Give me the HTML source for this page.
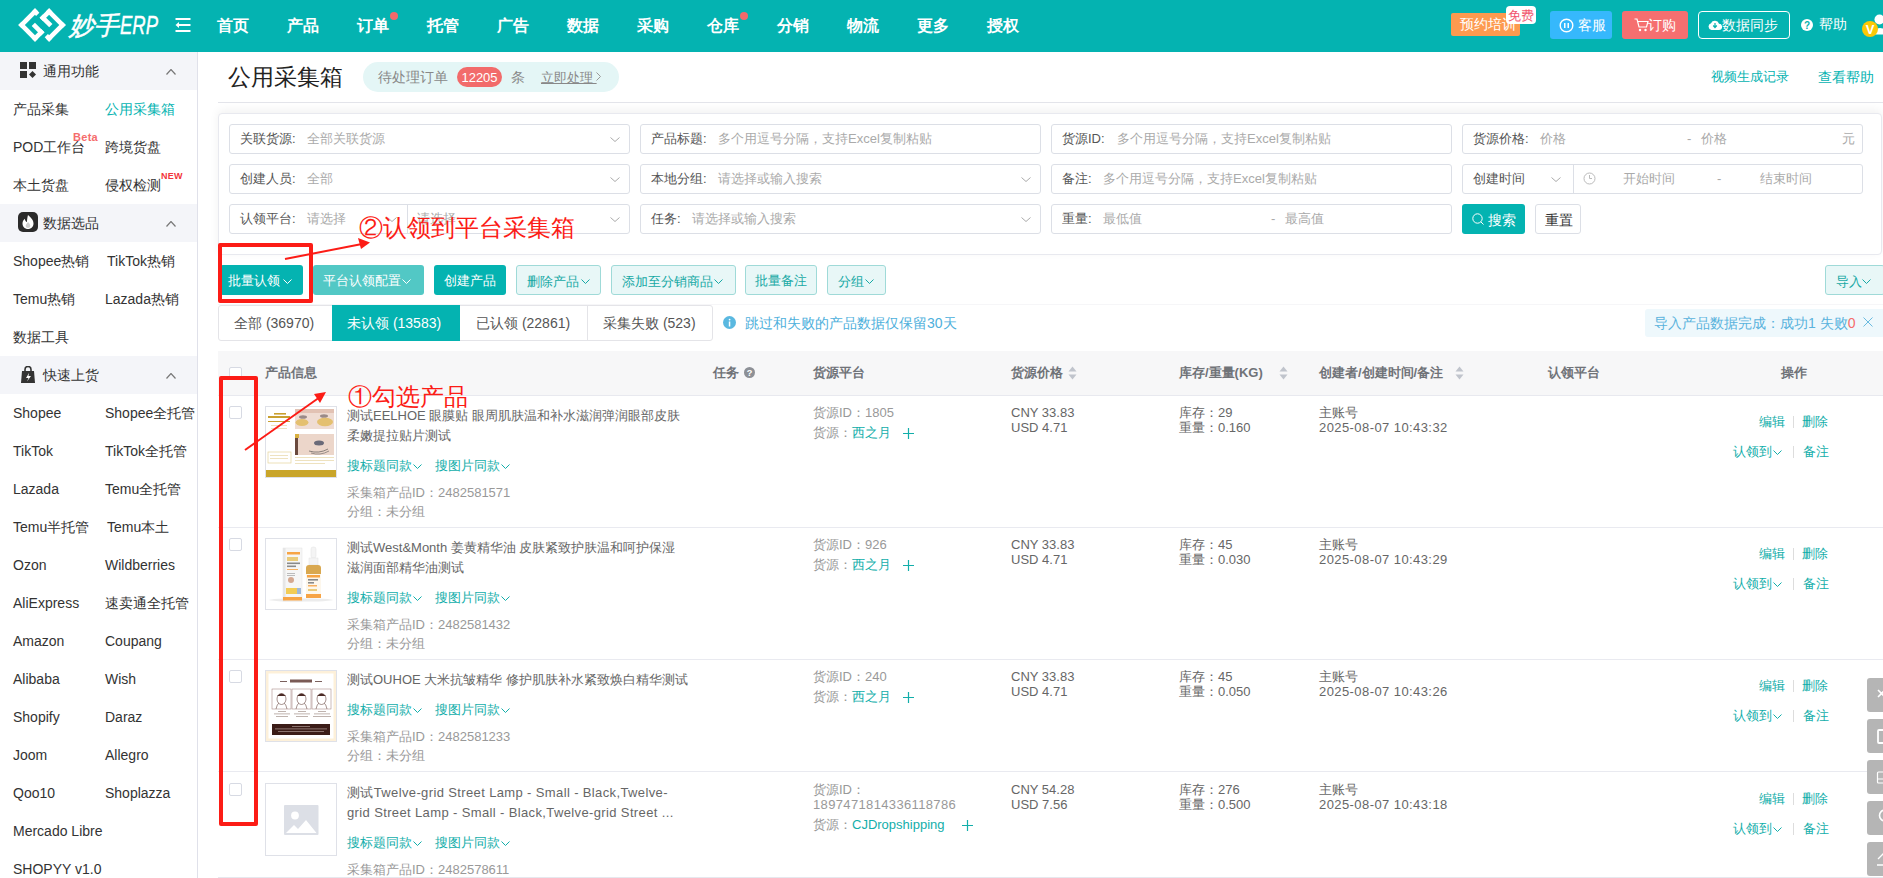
<!DOCTYPE html><html><head><meta charset="utf-8"><style>
*{box-sizing:border-box;margin:0;padding:0}
html,body{width:1883px;height:878px;overflow:hidden;background:#fff;font-family:"Liberation Sans",sans-serif;color:#333;font-size:14px;font-weight:350}
.a{position:absolute;white-space:nowrap}
.t{position:absolute;white-space:nowrap;line-height:20px}
.s13{font-size:13px}
.nav{font-size:16px;font-weight:bold;color:#fff;line-height:24px;top:14px}
.dot{position:absolute;width:8px;height:8px;border-radius:50%;background:#f46a6a}
.grp{position:absolute;left:0;width:197px;height:38px;background:#f4f5f9}
.inp{position:absolute;height:30px;border:1px solid #dcdfe6;border-radius:3px;background:#fff}
.lab{color:#555;font-size:13px}
.ph{color:#aaa;font-size:13px}
.btn{position:absolute;height:30px;border-radius:3px;font-size:13px;line-height:30px;text-align:left}
.cb{position:absolute;width:13px;height:13px;border:1px solid #d7dae3;border-radius:2px;background:#fff}
.link{color:#12aeaa}
.g9{color:#999}
.g5{color:#666}
.th{font-weight:bold;color:#707378;font-size:13px}
</style></head><body>
<div class="a" style="left:0;top:0;width:1883px;height:52px;background:#04b3b1"></div>
<svg class="a" style="left:0;top:0" width="200" height="52" viewBox="0 0 200 52">
<g fill="#fff" transform="translate(35 25) rotate(45)">
<rect x="-11.8" y="-11.8" width="4.6" height="23.6"/><rect x="-11.8" y="7.2" width="23.6" height="4.6"/>
<rect x="7.2" y="-1.6" width="4.6" height="13.4"/><rect x="-1.7" y="-1.6" width="13.5" height="4.6"/>
<rect x="-11.8" y="-11.8" width="6.2" height="4.6"/></g>
<g fill="#fff" transform="translate(49.1 25) rotate(45)">
<rect x="7.2" y="-11.8" width="4.6" height="23.6"/><rect x="-11.8" y="-11.8" width="23.6" height="4.6"/>
<rect x="-11.8" y="-11.8" width="4.6" height="13.4"/><rect x="-11.8" y="-3" width="13.5" height="4.6"/>
<rect x="5.6" y="7.2" width="6.2" height="4.6"/></g>
<text x="69" y="34" fill="#fff" stroke="#fff" stroke-width="0.5" font-size="25" font-style="italic" font-family="Liberation Sans, sans-serif" textLength="50" lengthAdjust="spacingAndGlyphs">妙手</text>
<text x="120" y="34" fill="#fff" stroke="#fff" stroke-width="0.4" font-size="25" font-style="italic" textLength="38" lengthAdjust="spacingAndGlyphs" font-family="Liberation Sans, sans-serif">ERP</text>
<g fill="#fff"><rect x="175.5" y="18" width="15" height="2"/><rect x="179" y="24" width="11.5" height="2"/><rect x="175.5" y="30" width="15" height="2"/><polygon points="175.5,25 179,22 179,28"/></g>
</svg>
<div class="a nav" style="left:217px">首页</div>
<div class="a nav" style="left:287px">产品</div>
<div class="a nav" style="left:357px">订单</div>
<div class="a nav" style="left:427px">托管</div>
<div class="a nav" style="left:497px">广告</div>
<div class="a nav" style="left:567px">数据</div>
<div class="a nav" style="left:637px">采购</div>
<div class="a nav" style="left:707px">仓库</div>
<div class="a nav" style="left:777px">分销</div>
<div class="a nav" style="left:847px">物流</div>
<div class="a nav" style="left:917px">更多</div>
<div class="a nav" style="left:987px">授权</div>
<div class="dot" style="left:390px;top:12px"></div>
<div class="dot" style="left:740px;top:12px"></div>
<div class="a" style="left:1451px;top:13px;width:69px;height:23px;background:#fd9a4f;border-radius:2px;color:#fff;font-size:14px;line-height:23px;padding-left:9px">预约培训</div>
<div class="a" style="left:1506px;top:6px;width:30px;height:18px;background:#fff;border-radius:4px;color:#f1566f;font-size:13px;line-height:20px;text-align:center">免费</div>
<div class="a" style="left:1550px;top:11px;width:62px;height:28px;background:#36b8fc;border-radius:3px;color:#fff;font-size:14px;line-height:28px;padding-left:28px">客服</div>
<svg class="a" style="left:1559px;top:18px" width="15" height="15" viewBox="0 0 15 15"><circle cx="7.5" cy="7.5" r="6.3" fill="none" stroke="#fff" stroke-width="1.4"/><rect x="5" y="5" width="1.5" height="5" fill="#fff"/><rect x="8.5" y="5" width="1.5" height="5" fill="#fff"/></svg>
<div class="a" style="left:1622px;top:11px;width:66px;height:28px;background:#f56f70;border-radius:3px;color:#fff;font-size:14px;line-height:28px;padding-left:26px">订购</div>
<svg class="a" style="left:1634px;top:18px" width="15" height="14" viewBox="0 0 15 14"><path d="M0.5 1 H3 L5 9 H12.5 L14 3.5 H4" fill="none" stroke="#fff" stroke-width="1.2"/><circle cx="6" cy="12" r="1.2" fill="#fff"/><circle cx="11.5" cy="12" r="1.2" fill="#fff"/></svg>
<div class="a" style="left:1698px;top:11px;width:92px;height:28px;border:1px solid #fff;border-radius:4px;color:#fff;font-size:14px;line-height:26px;padding-left:23px">数据同步</div>
<svg class="a" style="left:1708px;top:19px" width="14" height="12" viewBox="0 0 14 12"><path d="M3.5 11 A3.5 3.5 0 0 1 3 4.2 A4.3 4.3 0 0 1 11 4.8 A3.1 3.1 0 0 1 11 11 Z" fill="#fff"/><path d="M7 4 V8 M5.2 6.5 L7 8.5 L8.8 6.5" stroke="#05b2ae" stroke-width="1.2" fill="none"/></svg>
<svg class="a" style="left:1801px;top:19px" width="12" height="12" viewBox="0 0 12 12"><circle cx="6" cy="6" r="6" fill="#fff"/><text x="6" y="10" text-anchor="middle" font-size="10" font-weight="bold" fill="#05b2ae" font-family="Liberation Sans">?</text></svg>
<div class="t" style="left:1819px;top:14px;color:#fff;font-size:14px">帮助</div>
<svg class="a" style="left:1858px;top:10px" width="25" height="30" viewBox="0 0 25 30"><circle cx="21.5" cy="9.5" r="5" fill="#fff"/><path d="M15 24.5 Q15 18 22 18 Q29 18 29 24.5 Z" fill="#fff"/><circle cx="12" cy="19" r="8" fill="#fdc806"/><text x="12" y="24" text-anchor="middle" font-size="13" font-weight="bold" fill="#fff" font-family="Liberation Sans">V</text></svg>
<div class="a" style="left:197px;top:52px;width:1px;height:826px;background:#e0e1ea"></div>
<div class="grp" style="top:52px"></div>
<div class="t" style="left:43px;top:61px;font-size:14px;color:#333">通用功能</div>
<svg class="a" style="left:166px;top:69px" width="10" height="6" viewBox="0 0 10 6"><polyline points="0.5,5.5 5.0,0.5 9.5,5.5" fill="none" stroke="#777" stroke-width="1.2"/></svg>
<div class="grp" style="top:204px"></div>
<div class="t" style="left:43px;top:213px;font-size:14px;color:#333">数据选品</div>
<svg class="a" style="left:166px;top:221px" width="10" height="6" viewBox="0 0 10 6"><polyline points="0.5,5.5 5.0,0.5 9.5,5.5" fill="none" stroke="#777" stroke-width="1.2"/></svg>
<div class="grp" style="top:356px"></div>
<div class="t" style="left:43px;top:365px;font-size:14px;color:#333">快速上货</div>
<svg class="a" style="left:166px;top:373px" width="10" height="6" viewBox="0 0 10 6"><polyline points="0.5,5.5 5.0,0.5 9.5,5.5" fill="none" stroke="#777" stroke-width="1.2"/></svg>
<svg class="a" style="left:20px;top:62px" width="16" height="16" viewBox="0 0 16 16"><rect x="0" y="0" width="7" height="7" fill="#333"/><rect x="9" y="0" width="7" height="7" fill="#333"/><rect x="0" y="9" width="7" height="7" fill="#333"/><polygon points="12.5,9 16,12.5 12.5,16 9,12.5" fill="#333"/></svg>
<svg class="a" style="left:18px;top:212px" width="20" height="20" viewBox="0 0 20 20"><rect x="0" y="0" width="20" height="20" rx="5" fill="#2b2b2b"/><path d="M10 3 C13 6 15.5 8 15.5 11.5 C15.5 14.8 13 17 10 17 C7 17 4.5 14.8 4.5 11.5 C4.5 9.5 5.5 8 6.8 6.8 C7 8.8 8 10 9 10 C9 7 9.5 5 10 3 Z" fill="#fff"/><path d="M10 10 C11.5 11.5 12.3 12.5 12.3 14 C12.3 15.3 11.3 16 10 16 C8.7 16 7.7 15.3 7.7 14 C7.7 12.5 9 11.5 10 10 Z" fill="#cfcfcf"/></svg>
<svg class="a" style="left:21px;top:366px" width="14" height="17" viewBox="0 0 14 17"><path d="M4 5 V3.5 A3 3 0 0 1 10 3.5 V5" fill="none" stroke="#333" stroke-width="1.6"/><path d="M1 5 H13 L14 17 H0 Z" fill="#333"/><path d="M8 7 L5 12 H7.5 L6 15.5 L10 10 H7.5 Z" fill="#fff"/></svg>
<div class="t" style="left:13px;top:98.5px;color:#333">产品采集</div>
<div class="t" style="left:105px;top:98.5px;color:#04b3b1">公用采集箱</div>
<div class="t" style="left:13px;top:136.5px;color:#333">POD工作台</div>
<div class="t" style="left:105px;top:136.5px;color:#333">跨境货盘</div>
<div class="t" style="left:13px;top:174.5px;color:#333">本土货盘</div>
<div class="t" style="left:105px;top:174.5px;color:#333">侵权检测</div>
<div class="t" style="left:13px;top:250.5px;color:#333">Shopee热销</div>
<div class="t" style="left:107px;top:250.5px;color:#333">TikTok热销</div>
<div class="t" style="left:13px;top:288.5px;color:#333">Temu热销</div>
<div class="t" style="left:105px;top:288.5px;color:#333">Lazada热销</div>
<div class="t" style="left:13px;top:326.5px;color:#333">数据工具</div>
<div class="t" style="left:13px;top:402.5px;color:#333">Shopee</div>
<div class="t" style="left:105px;top:402.5px;color:#333">Shopee全托管</div>
<div class="t" style="left:13px;top:440.5px;color:#333">TikTok</div>
<div class="t" style="left:105px;top:440.5px;color:#333">TikTok全托管</div>
<div class="t" style="left:13px;top:478.5px;color:#333">Lazada</div>
<div class="t" style="left:105px;top:478.5px;color:#333">Temu全托管</div>
<div class="t" style="left:13px;top:516.5px;color:#333">Temu半托管</div>
<div class="t" style="left:107px;top:516.5px;color:#333">Temu本土</div>
<div class="t" style="left:13px;top:554.5px;color:#333">Ozon</div>
<div class="t" style="left:105px;top:554.5px;color:#333">Wildberries</div>
<div class="t" style="left:13px;top:592.5px;color:#333">AliExpress</div>
<div class="t" style="left:105px;top:592.5px;color:#333">速卖通全托管</div>
<div class="t" style="left:13px;top:630.5px;color:#333">Amazon</div>
<div class="t" style="left:105px;top:630.5px;color:#333">Coupang</div>
<div class="t" style="left:13px;top:668.5px;color:#333">Alibaba</div>
<div class="t" style="left:105px;top:668.5px;color:#333">Wish</div>
<div class="t" style="left:13px;top:706.5px;color:#333">Shopify</div>
<div class="t" style="left:105px;top:706.5px;color:#333">Daraz</div>
<div class="t" style="left:13px;top:744.5px;color:#333">Joom</div>
<div class="t" style="left:105px;top:744.5px;color:#333">Allegro</div>
<div class="t" style="left:13px;top:782.5px;color:#333">Qoo10</div>
<div class="t" style="left:105px;top:782.5px;color:#333">Shoplazza</div>
<div class="t" style="left:13px;top:820.5px;color:#333">Mercado Libre</div>
<div class="t" style="left:13px;top:858.5px;color:#333">SHOPYY v1.0</div>
<div class="t" style="left:73px;top:130px;font-size:11px;font-weight:bold;color:#f56c6c;line-height:14px;letter-spacing:0.3px">Beta</div>
<div class="t" style="left:161px;top:170px;font-size:9px;font-weight:bold;color:#f2353b;line-height:12px;letter-spacing:0.3px">NEW</div>
<div class="t" style="left:228px;top:63px;font-size:23px;line-height:28px;color:#222">公用采集箱</div>
<div class="a" style="left:363px;top:62px;width:256px;height:30px;border-radius:15px;background:#e4f6f6"></div>
<div class="t" style="left:378px;top:67px;color:#888">待处理订单</div>
<div class="a" style="left:457px;top:67px;width:45px;height:20px;border-radius:10px;background:#f26b6b;color:#fff;font-size:13px;line-height:21px;text-align:center">12205</div>
<div class="t" style="left:511px;top:67px;color:#888">条</div>
<div class="t s13" style="left:541px;top:68px;color:#888;text-decoration:underline;width:51px">立即处理&nbsp;</div>
<svg class="a" style="left:596px;top:72px" width="5" height="9" viewBox="0 0 5 9"><polyline points="0.5,0.5 4.5,4.5 0.5,8.5" fill="none" stroke="#999" stroke-width="1"/></svg>
<div class="t s13" style="left:1711px;top:67px;color:#04b3b1">视频生成记录</div>
<div class="t" style="left:1818px;top:67px;color:#04b3b1">查看帮助</div>
<div class="a" style="left:218px;top:102px;width:1665px;height:1px;background:#e3e4ea"></div>
<div class="a" style="left:218px;top:113px;width:1664px;height:142px;border:1px solid #e8e9ef;border-radius:4px;background:#fff;box-shadow:0 -3px 10px rgba(0,0,0,0.055)"></div>
<div class="a" style="left:218px;top:304px;width:1665px;height:1px;background:#f6f6f8"></div>
<div class="inp" style="left:229px;top:124px;width:401px"></div>
<div class="t lab" style="left:240px;top:129px">关联货源:</div>
<div class="t ph" style="left:307px;top:129px">全部关联货源</div>
<svg class="a" style="left:610px;top:137px" width="10" height="5" viewBox="0 0 10 5"><polyline points="0.5,0.5 5.0,4.5 9.5,0.5" fill="none" stroke="#aaa" stroke-width="1"/></svg>
<div class="inp" style="left:640px;top:124px;width:401px"></div>
<div class="t lab" style="left:651px;top:129px">产品标题:</div>
<div class="t ph" style="left:718px;top:129px">多个用逗号分隔，支持Excel复制粘贴</div>
<div class="inp" style="left:1051px;top:124px;width:401px"></div>
<div class="t lab" style="left:1062px;top:129px">货源ID:</div>
<div class="t ph" style="left:1117px;top:129px">多个用逗号分隔，支持Excel复制粘贴</div>
<div class="inp" style="left:1462px;top:124px;width:401px"></div>
<div class="t lab" style="left:1473px;top:129px">货源价格:</div>
<div class="t ph" style="left:1540px;top:129px">价格</div>
<div class="t ph" style="left:1687px;top:129px">-</div>
<div class="t ph" style="left:1701px;top:129px">价格</div>
<div class="t ph" style="left:1842px;top:129px">元</div>
<div class="inp" style="left:229px;top:164px;width:401px"></div>
<div class="t lab" style="left:240px;top:169px">创建人员:</div>
<div class="t ph" style="left:307px;top:169px">全部</div>
<svg class="a" style="left:610px;top:177px" width="10" height="5" viewBox="0 0 10 5"><polyline points="0.5,0.5 5.0,4.5 9.5,0.5" fill="none" stroke="#aaa" stroke-width="1"/></svg>
<div class="inp" style="left:640px;top:164px;width:401px"></div>
<div class="t lab" style="left:651px;top:169px">本地分组:</div>
<div class="t ph" style="left:718px;top:169px">请选择或输入搜索</div>
<svg class="a" style="left:1021px;top:177px" width="10" height="5" viewBox="0 0 10 5"><polyline points="0.5,0.5 5.0,4.5 9.5,0.5" fill="none" stroke="#aaa" stroke-width="1"/></svg>
<div class="inp" style="left:1051px;top:164px;width:401px"></div>
<div class="t lab" style="left:1062px;top:169px">备注:</div>
<div class="t ph" style="left:1103px;top:169px">多个用逗号分隔，支持Excel复制粘贴</div>
<div class="inp" style="left:1462px;top:164px;width:401px"></div>
<div class="a" style="left:1573px;top:165px;width:1px;height:28px;background:#dcdfe6"></div>
<div class="t lab" style="left:1473px;top:169px">创建时间</div>
<svg class="a" style="left:1551px;top:177px" width="10" height="5" viewBox="0 0 10 5"><polyline points="0.5,0.5 5.0,4.5 9.5,0.5" fill="none" stroke="#aaa" stroke-width="1"/></svg>
<svg class="a" style="left:1583px;top:172px" width="13" height="13" viewBox="0 0 13 13"><circle cx="6.5" cy="6.5" r="5.5" fill="none" stroke="#bbb" stroke-width="1"/><path d="M6.5 3 V6.5 H9" fill="none" stroke="#bbb" stroke-width="1"/></svg>
<div class="t ph" style="left:1623px;top:169px">开始时间</div>
<div class="t ph" style="left:1717px;top:169px">-</div>
<div class="t ph" style="left:1760px;top:169px">结束时间</div>
<div class="inp" style="left:229px;top:204px;width:401px"></div>
<div class="a" style="left:407px;top:205px;width:1px;height:28px;background:#dcdfe6"></div>
<div class="t lab" style="left:240px;top:209px">认领平台:</div>
<div class="t ph" style="left:307px;top:209px">请选择</div>
<div class="t ph" style="left:417px;top:209px">请选择</div>
<svg class="a" style="left:387px;top:217px" width="10" height="5" viewBox="0 0 10 5"><polyline points="0.5,0.5 5.0,4.5 9.5,0.5" fill="none" stroke="#aaa" stroke-width="1"/></svg>
<svg class="a" style="left:610px;top:217px" width="10" height="5" viewBox="0 0 10 5"><polyline points="0.5,0.5 5.0,4.5 9.5,0.5" fill="none" stroke="#aaa" stroke-width="1"/></svg>
<div class="inp" style="left:640px;top:204px;width:401px"></div>
<div class="t lab" style="left:651px;top:209px">任务:</div>
<div class="t ph" style="left:692px;top:209px">请选择或输入搜索</div>
<svg class="a" style="left:1021px;top:217px" width="10" height="5" viewBox="0 0 10 5"><polyline points="0.5,0.5 5.0,4.5 9.5,0.5" fill="none" stroke="#aaa" stroke-width="1"/></svg>
<div class="inp" style="left:1051px;top:204px;width:401px"></div>
<div class="t lab" style="left:1062px;top:209px">重量:</div>
<div class="t ph" style="left:1103px;top:209px">最低值</div>
<div class="t ph" style="left:1271px;top:209px">-</div>
<div class="t ph" style="left:1285px;top:209px">最高值</div>
<div class="btn" style="left:1462px;top:204px;width:63px;background:#04b3b1;color:#fff;padding-left:26px;font-size:14px;line-height:32px">搜索</div>
<svg class="a" style="left:1472px;top:213px" width="13" height="13" viewBox="0 0 13 13"><circle cx="5.5" cy="5.5" r="4.7" fill="none" stroke="#fff" stroke-width="1"/><path d="M8.8 8.8 L11.5 11.5" stroke="#fff" stroke-width="1"/></svg>
<div class="btn" style="left:1535px;top:204px;width:46px;border:1px solid #dcdfe6;color:#333;padding-left:9px;line-height:31px;font-size:14px">重置</div>
<div class="btn" style="left:220px;top:265px;width:83px;background:#04b3b1;color:#fff;padding-left:8px;line-height:31px">批量认领</div>
<svg class="a" style="left:283px;top:279px" width="9" height="5" viewBox="0 0 9 5"><polyline points="0.5,0.5 4.5,4.5 8.5,0.5" fill="none" stroke="#fff" stroke-width="1"/></svg>
<div class="btn" style="left:313px;top:265px;width:111px;background:#52c8c5;color:#fff;padding-left:10px;line-height:31px">平台认领配置</div>
<svg class="a" style="left:402px;top:279px" width="9" height="5" viewBox="0 0 9 5"><polyline points="0.5,0.5 4.5,4.5 8.5,0.5" fill="none" stroke="#fff" stroke-width="1"/></svg>
<div class="btn" style="left:434px;top:265px;width:72px;background:#04b3b1;color:#fff;text-align:center;line-height:31px">创建产品</div>
<div class="btn" style="left:516px;top:265px;width:85px;background:#e8f7f7;border:1px solid #9fdad8;color:#17a9a5;line-height:29px;padding-left:10px;line-height:31px">删除产品</div>
<svg class="a" style="left:581px;top:279px" width="9" height="5" viewBox="0 0 9 5"><polyline points="0.5,0.5 4.5,4.5 8.5,0.5" fill="none" stroke="#17a9a5" stroke-width="1"/></svg>
<div class="btn" style="left:611px;top:265px;width:125px;background:#e8f7f7;border:1px solid #9fdad8;color:#17a9a5;line-height:29px;padding-left:10px;line-height:31px">添加至分销商品</div>
<svg class="a" style="left:714px;top:279px" width="9" height="5" viewBox="0 0 9 5"><polyline points="0.5,0.5 4.5,4.5 8.5,0.5" fill="none" stroke="#17a9a5" stroke-width="1"/></svg>
<div class="btn" style="left:745px;top:265px;width:72px;background:#e8f7f7;border:1px solid #9fdad8;color:#17a9a5;line-height:29px;text-align:center">批量备注</div>
<div class="btn" style="left:827px;top:265px;width:59px;background:#e8f7f7;border:1px solid #9fdad8;color:#17a9a5;line-height:29px;padding-left:10px;line-height:31px">分组</div>
<svg class="a" style="left:865px;top:279px" width="9" height="5" viewBox="0 0 9 5"><polyline points="0.5,0.5 4.5,4.5 8.5,0.5" fill="none" stroke="#17a9a5" stroke-width="1"/></svg>
<div class="btn" style="left:1825px;top:265px;width:60px;background:#e8f7f7;border:1px solid #9fdad8;color:#17a9a5;line-height:29px;padding-left:10px;line-height:31px">导入</div>
<svg class="a" style="left:1862px;top:279px" width="9" height="5" viewBox="0 0 9 5"><polyline points="0.5,0.5 4.5,4.5 8.5,0.5" fill="none" stroke="#17a9a5" stroke-width="1"/></svg>
<div class="a" style="left:218px;top:305px;width:495px;height:36px;border:1px solid #e4e4e8;border-radius:3px"></div>
<div class="a" style="left:332px;top:305px;width:128px;height:36px;background:#04b3b1"></div>
<div class="a" style="left:587px;top:305px;width:1px;height:36px;background:#e4e4e8"></div>
<div class="t" style="left:234px;top:313px;color:#555">全部 (36970)</div>
<div class="t" style="left:347px;top:313px;color:#fff">未认领 (13583)</div>
<div class="t" style="left:476px;top:313px;color:#555">已认领 (22861)</div>
<div class="t" style="left:603px;top:313px;color:#555">采集失败 (523)</div>
<svg class="a" style="left:723px;top:316px" width="13" height="13" viewBox="0 0 13 13"><circle cx="6.5" cy="6.5" r="6.5" fill="#5ab8e0"/><rect x="5.8" y="5.5" width="1.5" height="5" fill="#fff"/><circle cx="6.6" cy="3.6" r="0.9" fill="#fff"/></svg>
<div class="t" style="left:745px;top:313px;color:#4eb0dc">跳过和失败的产品数据仅保留30天</div>
<div class="a" style="left:1645px;top:309px;width:240px;height:28px;background:#eef8fc;border-radius:3px"></div>
<div class="t" style="left:1654px;top:313px;color:#5ab3dd">导入产品数据完成：成功1 失败<span style="color:#f56c6c">0</span></div>
<svg class="a" style="left:1863px;top:317px" width="10" height="10" viewBox="0 0 10 10"><path d="M0.5 0.5 L9.5 9.5 M9.5 0.5 L0.5 9.5" stroke="#5ab3dd" stroke-width="0.9"/></svg>
<div class="a" style="left:218px;top:351px;width:1665px;height:45px;background:#f7f7f8;border-bottom:1px solid #e8e9ef"></div>
<div class="cb" style="left:229px;top:367px"></div>
<div class="t th" style="left:265px;top:363px">产品信息</div>
<div class="t th" style="left:713px;top:363px">任务</div>
<div class="t th" style="left:813px;top:363px">货源平台</div>
<div class="t th" style="left:1011px;top:363px">货源价格</div>
<div class="t th" style="left:1179px;top:363px">库存/重量(KG)</div>
<div class="t th" style="left:1319px;top:363px">创建者/创建时间/备注</div>
<div class="t th" style="left:1548px;top:363px">认领平台</div>
<div class="t th" style="left:1781px;top:363px">操作</div>
<svg class="a" style="left:744px;top:367px" width="11" height="11" viewBox="0 0 12 12"><circle cx="6" cy="6" r="6" fill="#8d9096"/><text x="6" y="10" text-anchor="middle" font-size="10" font-weight="bold" fill="#fff" font-family="Liberation Sans">?</text></svg>
<svg class="a" style="left:1068px;top:366px" width="9" height="14" viewBox="0 0 9 14"><polygon points="4.5,0.5 8.5,5.5 0.5,5.5" fill="#c0c4cc"/><polygon points="4.5,13.5 8.5,8.5 0.5,8.5" fill="#c0c4cc"/></svg>
<svg class="a" style="left:1279px;top:366px" width="9" height="14" viewBox="0 0 9 14"><polygon points="4.5,0.5 8.5,5.5 0.5,5.5" fill="#c0c4cc"/><polygon points="4.5,13.5 8.5,8.5 0.5,8.5" fill="#c0c4cc"/></svg>
<svg class="a" style="left:1455px;top:366px" width="9" height="14" viewBox="0 0 9 14"><polygon points="4.5,0.5 8.5,5.5 0.5,5.5" fill="#c0c4cc"/><polygon points="4.5,13.5 8.5,8.5 0.5,8.5" fill="#c0c4cc"/></svg>
<div class="a" style="left:218px;top:527px;width:1665px;height:1px;background:#e9eaf0"></div>
<div class="cb" style="left:229px;top:406px"></div>
<div class="a" style="left:265px;top:406px;width:72px;height:72px;border:1px solid #dfe1e8;background:#fff;overflow:hidden"><svg width="70" height="70" viewBox="0 0 70 70"><rect width="70" height="70" fill="#fff"/>
<rect x="8" y="6" width="12" height="1.6" fill="#c9a030"/><rect x="2" y="9" width="22" height="2" fill="#c9a030"/>
<rect x="2" y="14" width="22" height="1" fill="#c9a030"/><rect x="5" y="18" width="16" height="0.8" fill="#eadbb0"/><rect x="5" y="21" width="16" height="0.8" fill="#eadbb0"/>
<rect x="29" y="2" width="39" height="20" fill="#efdcd3"/><rect x="29" y="2" width="39" height="4" fill="#e2c2b4"/>
<ellipse cx="37" cy="10" rx="4" ry="1.8" fill="#9a8a88"/><ellipse cx="58" cy="9" rx="4" ry="1.8" fill="#9a8a88"/>
<ellipse cx="36" cy="15.5" rx="6.5" ry="3.5" fill="#e4c070"/><ellipse cx="59" cy="15" rx="8" ry="4.2" fill="#e4c070"/>
<rect x="29" y="27" width="39" height="21" fill="#ecd6ca"/><rect x="29" y="27" width="3" height="21" fill="#6a4a3e"/><rect x="29" y="27" width="4" height="4" fill="#d8b040"/>
<ellipse cx="53" cy="36" rx="5" ry="2.5" fill="#6a6a78"/><path d="M43 44 Q53 47 62 42" stroke="#444" stroke-width="0.6" fill="none"/><path d="M45 46 Q54 49 63 44" stroke="#444" stroke-width="0.5" fill="none"/>
<rect x="2" y="45" width="23" height="11" fill="none" stroke="#e6d49c" stroke-width="0.7"/><rect x="4" y="48" width="18" height="0.8" fill="#eadbb0"/><rect x="4" y="51" width="18" height="0.8" fill="#eadbb0"/>
<rect x="29" y="50" width="39" height="0.8" fill="#eadbb0"/><rect x="29" y="53" width="39" height="0.8" fill="#eadbb0"/><rect x="29" y="56" width="30" height="0.8" fill="#eadbb0"/>
<rect x="0" y="63" width="70" height="7" fill="#c9a52a"/></svg></div>
<div class="t g5 s13" style="left:347px;top:406px;letter-spacing:0px">测试EELHOE 眼膜贴 眼周肌肤温和补水滋润弹润眼部皮肤</div>
<div class="t g5 s13" style="left:347px;top:426px;letter-spacing:0px">柔嫩提拉贴片测试</div>
<div class="t link s13" style="left:347px;top:456px">搜标题同款</div>
<svg class="a" style="left:413px;top:464px" width="9" height="5" viewBox="0 0 9 5"><polyline points="0.5,0.5 4.5,4.5 8.5,0.5" fill="none" stroke="#12aeaa" stroke-width="1"/></svg>
<div class="t link s13" style="left:435px;top:456px">搜图片同款</div>
<svg class="a" style="left:501px;top:464px" width="9" height="5" viewBox="0 0 9 5"><polyline points="0.5,0.5 4.5,4.5 8.5,0.5" fill="none" stroke="#12aeaa" stroke-width="1"/></svg>
<div class="t g9 s13" style="left:347px;top:483px">采集箱产品ID：2482581571</div>
<div class="t g9 s13" style="left:347px;top:502px">分组：未分组</div>
<div class="t g9 s13" style="left:813px;top:405px;line-height:15px;letter-spacing:0px">货源ID：1805</div>
<div class="t s13" style="left:813px;top:423px"><span class="g9">货源：</span><span class="link">西之月</span></div>
<svg class="a" style="left:903px;top:428px" width="11" height="11" viewBox="0 0 11 11"><path d="M5.5 0 V11 M0 5.5 H11" stroke="#12aeaa" stroke-width="1.2"/></svg>
<div class="t g5 s13" style="left:1011px;top:405px;line-height:15px">CNY 33.83<br>USD 4.71</div>
<div class="t g5 s13" style="left:1179px;top:405px;line-height:15px">库存：29<br>重量：0.160</div>
<div class="t g5 s13" style="left:1319px;top:405px;line-height:15px">主账号<br><span style="letter-spacing:0.42px">2025-08-07 10:43:32</span></div>
<div class="t link s13" style="left:1759px;top:412px">编辑</div><div class="a" style="left:1793px;top:416px;width:1px;height:12px;background:#ddd"></div><div class="t link s13" style="left:1802px;top:412px">删除</div>
<div class="t link s13" style="left:1733px;top:442px">认领到</div><div class="a" style="left:1793px;top:446px;width:1px;height:12px;background:#ddd"></div><div class="t link s13" style="left:1803px;top:442px">备注</div>
<svg class="a" style="left:1773px;top:450px" width="9" height="5" viewBox="0 0 9 5"><polyline points="0.5,0.5 4.5,4.5 8.5,0.5" fill="none" stroke="#12aeaa" stroke-width="1"/></svg>
<div class="a" style="left:218px;top:659px;width:1665px;height:1px;background:#e9eaf0"></div>
<div class="cb" style="left:229px;top:538px"></div>
<div class="a" style="left:265px;top:538px;width:72px;height:72px;border:1px solid #dfe1e8;background:#fff;overflow:hidden"><svg width="70" height="70" viewBox="0 0 70 70"><rect width="70" height="70" fill="#fff"/>
<ellipse cx="35" cy="61" rx="32" ry="1.6" fill="#ececec"/>
<rect x="17" y="9" width="19" height="53" fill="#f6f6f6" stroke="#e2e2e2" stroke-width="0.5"/><rect x="17" y="9" width="2.5" height="53" fill="#e6e6e6"/>
<rect x="21" y="13" width="13" height="2.5" fill="#f7a445"/><rect x="21" y="18" width="11" height="4" fill="#eacb7a"/>
<rect x="21" y="23.5" width="13" height="1.6" fill="#8a8a8a"/><rect x="21" y="26.5" width="9" height="1.6" fill="#8a8a8a"/><rect x="21" y="30" width="11" height="1" fill="#f7b060"/>
<rect x="21" y="34" width="8" height="1" fill="#bbb"/><rect x="21" y="36" width="8" height="1" fill="#bbb"/>
<circle cx="25" cy="41" r="3" fill="#d4a890"/><rect x="20" y="49" width="14" height="6" fill="#f2cc55"/><rect x="31" y="49" width="4" height="6" fill="#9fb8d8"/><rect x="17" y="58" width="19" height="3.5" fill="#f7a445"/>
<rect x="45" y="8" width="5" height="11" rx="2" fill="#f4f4f4" stroke="#e2e2e2" stroke-width="0.5"/><rect x="43" y="19" width="9" height="7" fill="#f4f4f4" stroke="#e2e2e2" stroke-width="0.5"/>
<rect x="40" y="26" width="15" height="33" rx="3" fill="#d9a850"/><rect x="40" y="35" width="15" height="21" fill="#fdf7ec"/><rect x="41" y="36" width="13" height="2.5" fill="#f7a445"/>
<rect x="42" y="40" width="10" height="1.6" fill="#8a8a8a"/><rect x="42" y="43" width="6" height="1.6" fill="#8a8a8a"/><rect x="42" y="46" width="9" height="1.5" fill="#f7b060"/><rect x="42" y="50" width="9" height="2" fill="#eacb7a"/><rect x="40" y="55" width="15" height="4" fill="#f7a445"/></svg></div>
<div class="t g5 s13" style="left:347px;top:538px;letter-spacing:0px">测试West&amp;Month 姜黄精华油 皮肤紧致护肤温和呵护保湿</div>
<div class="t g5 s13" style="left:347px;top:558px;letter-spacing:0px">滋润面部精华油测试</div>
<div class="t link s13" style="left:347px;top:588px">搜标题同款</div>
<svg class="a" style="left:413px;top:596px" width="9" height="5" viewBox="0 0 9 5"><polyline points="0.5,0.5 4.5,4.5 8.5,0.5" fill="none" stroke="#12aeaa" stroke-width="1"/></svg>
<div class="t link s13" style="left:435px;top:588px">搜图片同款</div>
<svg class="a" style="left:501px;top:596px" width="9" height="5" viewBox="0 0 9 5"><polyline points="0.5,0.5 4.5,4.5 8.5,0.5" fill="none" stroke="#12aeaa" stroke-width="1"/></svg>
<div class="t g9 s13" style="left:347px;top:615px">采集箱产品ID：2482581432</div>
<div class="t g9 s13" style="left:347px;top:634px">分组：未分组</div>
<div class="t g9 s13" style="left:813px;top:537px;line-height:15px;letter-spacing:0px">货源ID：926</div>
<div class="t s13" style="left:813px;top:555px"><span class="g9">货源：</span><span class="link">西之月</span></div>
<svg class="a" style="left:903px;top:560px" width="11" height="11" viewBox="0 0 11 11"><path d="M5.5 0 V11 M0 5.5 H11" stroke="#12aeaa" stroke-width="1.2"/></svg>
<div class="t g5 s13" style="left:1011px;top:537px;line-height:15px">CNY 33.83<br>USD 4.71</div>
<div class="t g5 s13" style="left:1179px;top:537px;line-height:15px">库存：45<br>重量：0.030</div>
<div class="t g5 s13" style="left:1319px;top:537px;line-height:15px">主账号<br><span style="letter-spacing:0.42px">2025-08-07 10:43:29</span></div>
<div class="t link s13" style="left:1759px;top:544px">编辑</div><div class="a" style="left:1793px;top:548px;width:1px;height:12px;background:#ddd"></div><div class="t link s13" style="left:1802px;top:544px">删除</div>
<div class="t link s13" style="left:1733px;top:574px">认领到</div><div class="a" style="left:1793px;top:578px;width:1px;height:12px;background:#ddd"></div><div class="t link s13" style="left:1803px;top:574px">备注</div>
<svg class="a" style="left:1773px;top:582px" width="9" height="5" viewBox="0 0 9 5"><polyline points="0.5,0.5 4.5,4.5 8.5,0.5" fill="none" stroke="#12aeaa" stroke-width="1"/></svg>
<div class="a" style="left:218px;top:771px;width:1665px;height:1px;background:#e9eaf0"></div>
<div class="cb" style="left:229px;top:670px"></div>
<div class="a" style="left:265px;top:670px;width:72px;height:72px;border:1px solid #dfe1e8;background:#fff;overflow:hidden"><svg width="70" height="70" viewBox="0 0 70 70"><rect width="70" height="70" fill="#fdf0d9"/><rect x="2.5" y="2.5" width="65" height="65" fill="#fff"/>
<rect x="14" y="10" width="7" height="0.8" fill="#5a3a35"/><rect x="24" y="8.5" width="22" height="3" fill="#7a5a55"/><rect x="49" y="10" width="7" height="0.8" fill="#5a3a35"/>
<rect x="6" y="18" width="19" height="20" fill="none" stroke="#9a7a75" stroke-width="0.5"/><rect x="26" y="18" width="19" height="20" fill="none" stroke="#9a7a75" stroke-width="0.5"/><rect x="46" y="18" width="19" height="20" fill="none" stroke="#9a7a75" stroke-width="0.5"/>
<g fill="none" stroke="#6a4a45" stroke-width="0.6"><ellipse cx="15.5" cy="28" rx="4.5" ry="5.5"/><ellipse cx="35.5" cy="28" rx="4.5" ry="5.5"/><ellipse cx="55.5" cy="28" rx="4.5" ry="5.5"/>
<path d="M10 38 Q11 33 13 32 M21 38 Q20 33 18 32 M30 38 Q31 33 33 32 M41 38 Q40 33 38 32 M50 38 Q51 33 53 32 M61 38 Q60 33 58 32"/></g>
<path d="M11 25 Q15.5 20 20 25" fill="#4a2a25"/><path d="M31 25 Q35.5 20 40 25" fill="#4a2a25"/><path d="M51 25 Q55.5 20 60 25" fill="#4a2a25"/>
<g fill="#b0a09a"><rect x="12" y="40" width="8" height="0.8"/><rect x="32" y="40" width="8" height="0.8"/><rect x="52" y="40" width="8" height="0.8"/>
<rect x="8" y="42.5" width="16" height="0.8"/><rect x="28" y="42.5" width="16" height="0.8"/><rect x="48" y="42.5" width="16" height="0.8"/>
<rect x="10" y="45" width="12" height="0.8"/><rect x="30" y="45" width="12" height="0.8"/><rect x="47" y="45" width="18" height="0.8"/></g>
<rect x="6" y="53" width="58" height="11" fill="#3b1c17"/><rect x="26" y="55" width="18" height="0.8" fill="#a08a85"/><rect x="9" y="57.5" width="52" height="0.8" fill="#a08a85"/><rect x="12" y="60" width="46" height="0.8" fill="#a08a85"/></svg></div>
<div class="t g5 s13" style="left:347px;top:670px;letter-spacing:0px">测试OUHOE 大米抗皱精华 修护肌肤补水紧致焕白精华测试</div>
<div class="t link s13" style="left:347px;top:700px">搜标题同款</div>
<svg class="a" style="left:413px;top:708px" width="9" height="5" viewBox="0 0 9 5"><polyline points="0.5,0.5 4.5,4.5 8.5,0.5" fill="none" stroke="#12aeaa" stroke-width="1"/></svg>
<div class="t link s13" style="left:435px;top:700px">搜图片同款</div>
<svg class="a" style="left:501px;top:708px" width="9" height="5" viewBox="0 0 9 5"><polyline points="0.5,0.5 4.5,4.5 8.5,0.5" fill="none" stroke="#12aeaa" stroke-width="1"/></svg>
<div class="t g9 s13" style="left:347px;top:727px">采集箱产品ID：2482581233</div>
<div class="t g9 s13" style="left:347px;top:746px">分组：未分组</div>
<div class="t g9 s13" style="left:813px;top:669px;line-height:15px;letter-spacing:0px">货源ID：240</div>
<div class="t s13" style="left:813px;top:687px"><span class="g9">货源：</span><span class="link">西之月</span></div>
<svg class="a" style="left:903px;top:692px" width="11" height="11" viewBox="0 0 11 11"><path d="M5.5 0 V11 M0 5.5 H11" stroke="#12aeaa" stroke-width="1.2"/></svg>
<div class="t g5 s13" style="left:1011px;top:669px;line-height:15px">CNY 33.83<br>USD 4.71</div>
<div class="t g5 s13" style="left:1179px;top:669px;line-height:15px">库存：45<br>重量：0.050</div>
<div class="t g5 s13" style="left:1319px;top:669px;line-height:15px">主账号<br><span style="letter-spacing:0.42px">2025-08-07 10:43:26</span></div>
<div class="t link s13" style="left:1759px;top:676px">编辑</div><div class="a" style="left:1793px;top:680px;width:1px;height:12px;background:#ddd"></div><div class="t link s13" style="left:1802px;top:676px">删除</div>
<div class="t link s13" style="left:1733px;top:706px">认领到</div><div class="a" style="left:1793px;top:710px;width:1px;height:12px;background:#ddd"></div><div class="t link s13" style="left:1803px;top:706px">备注</div>
<svg class="a" style="left:1773px;top:714px" width="9" height="5" viewBox="0 0 9 5"><polyline points="0.5,0.5 4.5,4.5 8.5,0.5" fill="none" stroke="#12aeaa" stroke-width="1"/></svg>
<div class="a" style="left:218px;top:892px;width:1665px;height:1px;background:#e9eaf0"></div>
<div class="cb" style="left:229px;top:783px"></div>
<div class="a" style="left:265px;top:783px;width:72px;height:73px;border:1px solid #dfe1e8;background:#fff;overflow:hidden"><svg width="70" height="71" viewBox="0 0 70 71"><rect width="70" height="71" fill="#fff"/>
<rect x="18" y="21" width="34.5" height="30" rx="1" fill="#dcdfe6"/><circle cx="29" cy="31.5" r="3.9" fill="#fff"/><polygon points="20,49 28,41 32,45 40,36 50.5,49" fill="#fff"/></svg></div>
<div class="t g5 s13" style="left:347px;top:783px;letter-spacing:0.37px">测试Twelve-grid Street Lamp - Small - Black,Twelve-</div>
<div class="t g5 s13" style="left:347px;top:803px;letter-spacing:0.37px">grid Street Lamp - Small - Black,Twelve-grid Street ...</div>
<div class="t link s13" style="left:347px;top:833px">搜标题同款</div>
<svg class="a" style="left:413px;top:841px" width="9" height="5" viewBox="0 0 9 5"><polyline points="0.5,0.5 4.5,4.5 8.5,0.5" fill="none" stroke="#12aeaa" stroke-width="1"/></svg>
<div class="t link s13" style="left:435px;top:833px">搜图片同款</div>
<svg class="a" style="left:501px;top:841px" width="9" height="5" viewBox="0 0 9 5"><polyline points="0.5,0.5 4.5,4.5 8.5,0.5" fill="none" stroke="#12aeaa" stroke-width="1"/></svg>
<div class="t g9 s13" style="left:347px;top:860px">采集箱产品ID：2482578611</div>
<div class="t g9 s13" style="left:813px;top:782px;line-height:15px;letter-spacing:0px">货源ID：</div>
<div class="t g9 s13" style="left:813px;top:797px;line-height:15px;letter-spacing:0.35px">1897471814336118786</div>
<div class="t s13" style="left:813px;top:815px"><span class="g9">货源：</span><span class="link">CJDropshipping</span></div>
<svg class="a" style="left:962px;top:820px" width="11" height="11" viewBox="0 0 11 11"><path d="M5.5 0 V11 M0 5.5 H11" stroke="#12aeaa" stroke-width="1.2"/></svg>
<div class="t g5 s13" style="left:1011px;top:782px;line-height:15px">CNY 54.28<br>USD 7.56</div>
<div class="t g5 s13" style="left:1179px;top:782px;line-height:15px">库存：276<br>重量：0.500</div>
<div class="t g5 s13" style="left:1319px;top:782px;line-height:15px">主账号<br><span style="letter-spacing:0.42px">2025-08-07 10:43:18</span></div>
<div class="t link s13" style="left:1759px;top:789px">编辑</div><div class="a" style="left:1793px;top:793px;width:1px;height:12px;background:#ddd"></div><div class="t link s13" style="left:1802px;top:789px">删除</div>
<div class="t link s13" style="left:1733px;top:819px">认领到</div><div class="a" style="left:1793px;top:823px;width:1px;height:12px;background:#ddd"></div><div class="t link s13" style="left:1803px;top:819px">备注</div>
<svg class="a" style="left:1773px;top:827px" width="9" height="5" viewBox="0 0 9 5"><polyline points="0.5,0.5 4.5,4.5 8.5,0.5" fill="none" stroke="#12aeaa" stroke-width="1"/></svg>
<div class="a" style="left:218px;top:877px;width:1665px;height:1px;background:#e6e8ee"></div>
<div class="a" style="left:1867px;top:678px;width:20px;height:34px;background:#b3b3b3;border-radius:3px;opacity:0.97"></div>
<div class="a" style="left:1867px;top:719px;width:20px;height:34px;background:#b3b3b3;border-radius:3px;opacity:0.97"></div>
<div class="a" style="left:1867px;top:760px;width:20px;height:34px;background:#b3b3b3;border-radius:3px;opacity:0.97"></div>
<div class="a" style="left:1867px;top:801px;width:20px;height:34px;background:#b3b3b3;border-radius:3px;opacity:0.97"></div>
<div class="a" style="left:1867px;top:842px;width:20px;height:34px;background:#b3b3b3;border-radius:3px;opacity:0.97"></div>
<svg class="a" style="left:1867px;top:678px" width="16" height="200" viewBox="0 0 16 200">
<path d="M11 12 L18 19 M18 12 L11 19" stroke="#fff" stroke-width="1.6" fill="none"/>
<rect x="11" y="52" width="8" height="13" rx="1" fill="none" stroke="#fff" stroke-width="1.8"/>
<rect x="10.5" y="94" width="8" height="11" rx="1" fill="none" stroke="#fff" stroke-width="1.2"/><path d="M10.5 101 H18" stroke="#fff" stroke-width="1"/>
<path d="M18 132 A5.5 5.5 0 0 0 18 143" stroke="#fff" stroke-width="1.6" fill="none"/>
<path d="M11 181 L16 176 L21 181 M10 187 H18" stroke="#fff" stroke-width="1.4" fill="none"/>
</svg>
<div class="a" style="left:218px;top:243px;width:95px;height:60px;border:4px solid #fc1c16;border-radius:2px"></div>
<div class="a" style="left:219px;top:376px;width:39px;height:450px;border:4px solid #fc1c16;border-radius:2px"></div>
<svg class="a" style="left:0;top:0" width="1883" height="878" viewBox="0 0 1883 878">
<line x1="285" y1="259" x2="362" y2="244" stroke="#fc1c16" stroke-width="2"/>
<polygon points="370,242.5 358,238 361,249" fill="#fc1c16"/>
<line x1="245" y1="450" x2="320" y2="397" stroke="#fc1c16" stroke-width="2"/>
<polygon points="326,392 314,394 320,403" fill="#fc1c16"/>
</svg>
<div class="t" style="left:359px;top:213px;font-size:24px;line-height:30px;color:#fc1c16">②认领到平台采集箱</div>
<div class="t" style="left:348px;top:382px;font-size:24px;line-height:30px;color:#fc1c16">①勾选产品</div>
</body></html>
